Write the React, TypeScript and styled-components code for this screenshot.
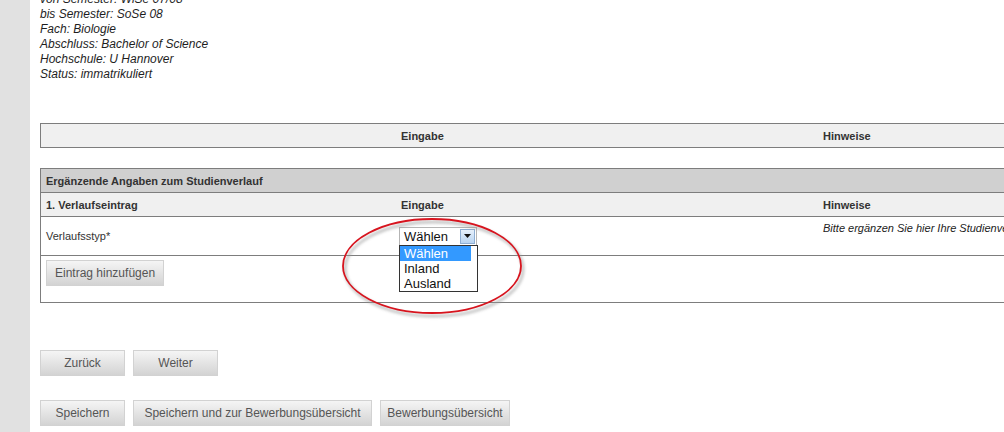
import React from "react";
import styled, { createGlobalStyle } from "styled-components";

const Global = createGlobalStyle`
  html, body { margin: 0; padding: 0; overflow: hidden; background: #fff; }
  body { font-family: "Liberation Sans", Arial, sans-serif; }
`;

const Page = styled.div`
  display: flex;
  min-height: 432px;
  width: 1300px;
`;

const Sidebar = styled.div`
  flex: none;
  width: 30px;
  background: #e1e1e1;
`;

const Main = styled.div`
  flex: none;
  width: 1250px;
  padding-left: 10px;
`;

const Info = styled.div`
  margin-top: -8px;
  font-size: 12px;
  line-height: 15px;
  font-style: italic;
  color: #1e1e1e;
`;

const Table = styled.div<{ $mt: number }>`
  margin-top: ${(p) => p.$mt}px;
  border: 1px solid #7d7d7d;
  border-right: none;
`;

const Row = styled.div<{ $bg?: string; $h: number; $cols?: boolean }>`
  display: grid;
  grid-template-columns: ${(p) => (p.$cols === false ? "1fr" : "355px 422px 1fr")};
  height: ${(p) => p.$h}px;
  background: ${(p) => p.$bg || "#fff"};
  & + & { border-top: 1px solid #7d7d7d; }
`;

const Cell = styled.div<{ $align?: string; $pt?: number; $pl?: number }>`
  display: flex;
  align-items: ${(p) => p.$align || "center"};
  padding: ${(p) => p.$pt ?? 0}px 5px 0 ${(p) => p.$pl ?? 5}px;
  font-size: 11px;
  color: #333;
  min-width: 0;
  white-space: nowrap;
`;

const HeadCell = styled(Cell)`
  font-weight: bold;
`;

const HintCell = styled(Cell)`
  font-style: italic;
  color: #222;
`;

const SelectBox = styled.div`
  position: relative;
  width: 78px;
  height: 19px;
  box-sizing: border-box;
  border: 1px solid #b4b4b4;
  background: #fff;
  display: flex;
  align-items: center;
  font-size: 13px;
  color: #111;
`;

const SelectValue = styled.div`
  flex: 1;
  padding-left: 4px;
`;

const ArrowButton = styled.div`
  width: 15px;
  height: 15px;
  margin-right: 1px;
  box-sizing: border-box;
  border: 1px solid #8eaed3;
  background: linear-gradient(#e6f0fb, #b9d4f1);
  display: flex;
  align-items: center;
  justify-content: center;
`;

const ListBox = styled.div`
  position: absolute;
  left: -1px;
  top: 17px;
  width: 79px;
  box-sizing: border-box;
  border: 1px solid #333;
  background: #fff;
  z-index: 2;
`;

const Option = styled.div<{ $sel?: boolean }>`
  height: 15px;
  line-height: 15px;
  padding-left: 4px;
  margin-right: ${(p) => (p.$sel ? "6px" : "0")};
  background: ${(p) => (p.$sel ? "#3399ff" : "transparent")};
  color: ${(p) => (p.$sel ? "#fff" : "#111")};
`;

const Ellipse = styled.svg`
  position: absolute;
  left: -62px;
  top: -15px;
  width: 190px;
  height: 110px;
  pointer-events: none;
  overflow: visible;
  z-index: 3;
`;

const Button = styled.div<{ $w?: number }>`
  display: inline-flex;
  align-items: center;
  justify-content: center;
  height: 26px;
  min-width: 85px;
  ${(p) => (p.$w ? `width: ${p.$w}px;` : "")}
  padding: 0 8px;
  box-sizing: border-box;
  border: 1px solid #d2d2d2;
  background: linear-gradient(#f5f5f5, #d3d3d3);
  color: #555;
  font-size: 12px;
  white-space: nowrap;
`;

const ButtonRow = styled.div<{ $mt: number }>`
  display: flex;
  gap: 8px;
  margin-top: ${(p) => p.$mt}px;
`;

export default function App() {
  return (
    <>
      <Global />
      <Page>
        <Sidebar />
        <Main>
          <Info>
            <div>von Semester: WiSe 07/08</div>
            <div>bis Semester: SoSe 08</div>
            <div>Fach: Biologie</div>
            <div>Abschluss: Bachelor of Science</div>
            <div>Hochschule: U Hannover</div>
            <div>Status: immatrikuliert</div>
          </Info>

          <Table $mt={41}>
            <Row $bg="#f0f0f0" $h={23}>
              <HeadCell />
              <HeadCell>Eingabe</HeadCell>
              <HeadCell>Hinweise</HeadCell>
            </Row>
          </Table>

          <Table $mt={20}>
            <Row $bg="#d0d0d0" $h={23} $cols={false}>
              <HeadCell>Ergänzende Angaben zum Studienverlauf</HeadCell>
            </Row>
            <Row $bg="#f0f0f0" $h={23}>
              <HeadCell>1. Verlaufseintrag</HeadCell>
              <HeadCell>Eingabe</HeadCell>
              <HeadCell>Hinweise</HeadCell>
            </Row>
            <Row $h={38}>
              <Cell>Verlaufsstyp*</Cell>
              <Cell $pl={3}>
                <SelectBox>
                  <SelectValue>Wählen</SelectValue>
                  <ArrowButton>
                    <svg width="7" height="4" viewBox="0 0 7 4">
                      <path d="M0 0 H7 L3.5 4 Z" fill="#111" />
                    </svg>
                  </ArrowButton>
                  <ListBox>
                    <Option $sel>Wählen</Option>
                    <Option>Inland</Option>
                    <Option>Ausland</Option>
                  </ListBox>
                  <Ellipse viewBox="0 0 190 110">
                    <defs>
                      <filter id="sh" x="-20%" y="-20%" width="140%" height="140%">
                        <feGaussianBlur stdDeviation="1.5" />
                      </filter>
                    </defs>
                    <ellipse cx="96" cy="56" rx="89" ry="47" fill="none" stroke="#9a9a9a" strokeWidth="2.5" filter="url(#sh)" opacity="0.7" />
                    <ellipse cx="94" cy="53" rx="89" ry="47" fill="none" stroke="#d7141e" strokeWidth="1.8" />
                  </Ellipse>
                </SelectBox>
              </Cell>
              <HintCell $align="flex-start" $pt={5}>
                Bitte ergänzen Sie hier Ihre Studienverläufe, die Sie im In- und Ausland absolviert haben.
              </HintCell>
            </Row>
            <Row $h={46}>
              <Cell $align="flex-start" $pt={4}>
                <Button>Eintrag hinzufügen</Button>
              </Cell>
              <Cell />
              <Cell />
            </Row>
          </Table>

          <ButtonRow $mt={47}>
            <Button>Zurück</Button>
            <Button>Weiter</Button>
          </ButtonRow>
          <ButtonRow $mt={24}>
            <Button>Speichern</Button>
            <Button $w={239}>Speichern und zur Bewerbungsübersicht</Button>
            <Button $w={130}>Bewerbungsübersicht</Button>
          </ButtonRow>
        </Main>
      </Page>
    </>
  );
}
